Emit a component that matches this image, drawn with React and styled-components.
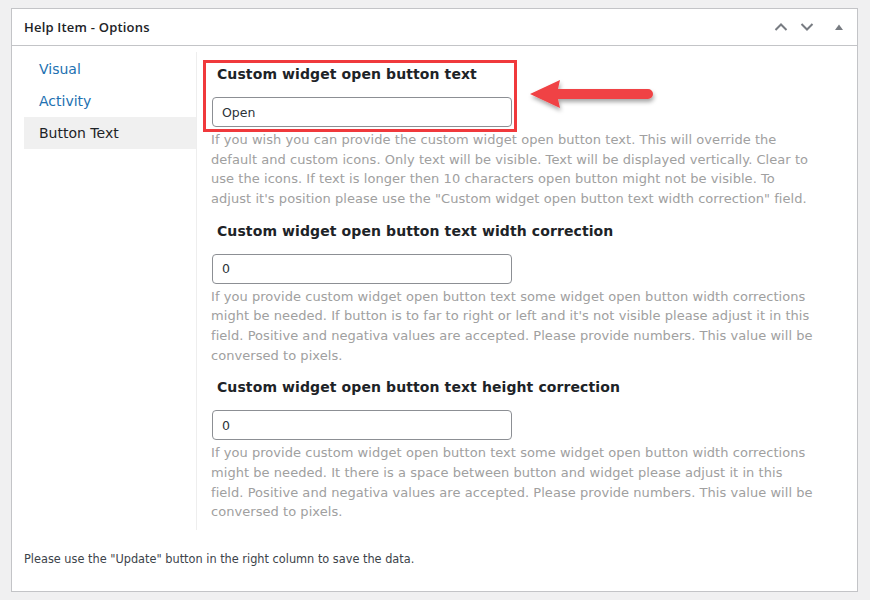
import React from "react";
import styled, { createGlobalStyle } from "styled-components";

const Global = createGlobalStyle`
  html, body { margin: 0; padding: 0; }
  body {
    background: #f0f0f1;
    font-family: "DejaVu Sans", sans-serif;
    color: #3c434a;
  }
  *, *::before, *::after { box-sizing: border-box; }
`;

const Page = styled.div`
  width: 870px;
  height: 600px;
  padding: 8px 12px 8px 11px;
`;

const Panel = styled.div`
  position: relative;
  width: 847px;
  height: 584px;
  background: #fff;
  border: 1px solid #c3c4c7;
  display: flex;
  flex-direction: column;
`;

const Header = styled.div`
  height: 37px;
  border-bottom: 1px solid #c3c4c7;
  display: flex;
  align-items: center;
  padding: 0 5px 0 12px;
`;

const Title = styled.h2`
  margin: 0;
  flex: 1;
  font-family: "Open Sans", "Noto Sans", sans-serif;
  font-size: 13px;
  font-weight: 600;
  letter-spacing: 0.2px;
  color: #1d2327;
`;

const HeaderButtons = styled.div`
  display: flex;
  align-items: center;
`;

const IconButton = styled.button`
  width: 26px;
  height: 36px;
  padding: 0;
  margin-left: ${(p) => (p.$gap ? "6px" : "0")};
  border: 0;
  background: none;
  display: flex;
  align-items: center;
  justify-content: center;
  color: #787c82;
`;

const Body = styled.div`
  display: flex;
  padding: 6px 0 0 12px;
`;

const Sidebar = styled.ul`
  list-style: none;
  margin: 0;
  padding: 1px 0 0 0;
  width: 173px;
  border-right: 1px solid #eeeeee;
  height: 478px;
`;

const TabItem = styled.li`
  height: 32px;
  display: flex;
  align-items: center;
  padding-left: 15px;
  font-family: "DejaVu Sans", sans-serif;
  font-size: 14px;
  color: ${(p) => (p.$active ? "#1d2327" : "#2271b1")};
  background: ${(p) => (p.$active ? "#f0f0f0" : "transparent")};
`;

const Content = styled.div`
  flex: 1;
  padding: 12px 0 0 15px;
  display: flex;
  flex-direction: column;
`;

const Field = styled.div`
  position: relative;
  width: 600px;
  margin-bottom: 12px;

  ${(p) =>
    p.$highlight &&
    `
    &::before {
      content: "";
      position: absolute;
      left: -9px;
      top: -4px;
      width: 314px;
      height: 72px;
      border: 3px solid #f0393c;
      pointer-events: none;
    }
  `}
`;

const Label = styled.label`
  display: block;
  padding-left: 5px;
  font-family: "DejaVu Sans", sans-serif;
  font-weight: bold;
  font-size: 14px;
  line-height: 20px;
  letter-spacing: 0.1px;
  color: #1d2327;
  margin-bottom: 13px;
`;

const Input = styled.input`
  display: block;
  width: 300px;
  height: 30px;
  border: 1px solid #8c8f94;
  border-radius: 4px;
  padding: 0 9px;
  font-family: "DejaVu Sans", sans-serif;
  font-size: 12.5px;
  color: #2c3338;
  background: #fff;
  outline: none;
`;

const Description = styled.p`
  margin: 3px 0 0 -1px;
  font-family: "DejaVu Sans", sans-serif;
  font-size: 13px;
  line-height: 19.67px;
  letter-spacing: 0.05px;
  color: #a0a0a0;
`;

const DescLine = styled.span`
  display: block;
  white-space: nowrap;
`;

const Footer = styled.p`
  margin: 17px 0 0 12px;
  font-family: "DejaVu Sans Condensed", "DejaVu Sans", sans-serif;
  font-size: 12.6px;
  color: #3c434a;
`;

const Arrow = styled.svg`
  position: absolute;
  left: 506px;
  top: 61px;
`;

const ChevronUp = () => (
  <svg width="14" height="10" viewBox="0 0 14 10">
    <path d="M1.5 8 L7 2.5 L12.5 8" fill="none" stroke="currentColor" strokeWidth="2" />
  </svg>
);
const ChevronDown = () => (
  <svg width="14" height="10" viewBox="0 0 14 10">
    <path d="M1.5 2 L7 7.5 L12.5 2" fill="none" stroke="currentColor" strokeWidth="2" />
  </svg>
);
const Triangle = () => (
  <svg width="10" height="8" viewBox="0 0 10 8">
    <path d="M1 7 L5 1.5 L9 7 Z" fill="currentColor" />
  </svg>
);

const fields = [
  {
    label: "Custom widget open button text",
    value: "Open",
    highlight: true,
    desc: [
      "If you wish you can provide the custom widget open button text. This will override the",
      "default and custom icons. Only text will be visible. Text will be displayed vertically. Clear to",
      "use the icons. If text is longer then 10 characters open button might not be visible. To",
      'adjust it\'s position please use the "Custom widget open button text width correction" field.',
    ],
  },
  {
    label: "Custom widget open button text width correction",
    value: "0",
    desc: [
      "If you provide custom widget open button text some widget open button width corrections",
      "might be needed. If button is to far to right or left and it's not visible please adjust it in this",
      "field. Positive and negativa values are accepted. Please provide numbers. This value will be",
      "conversed to pixels.",
    ],
  },
  {
    label: "Custom widget open button text height correction",
    value: "0",
    desc: [
      "If you provide custom widget open button text some widget open button width corrections",
      "might be needed. It there is a space between button and widget please adjust it in this",
      "field. Positive and negativa values are accepted. Please provide numbers. This value will be",
      "conversed to pixels.",
    ],
  },
];

export default function App() {
  return (
    <>
      <Global />
      <Page>
        <Panel>
          <Header>
            <Title>Help Item - Options</Title>
            <HeaderButtons>
              <IconButton aria-label="Move up"><ChevronUp /></IconButton>
              <IconButton aria-label="Move down"><ChevronDown /></IconButton>
              <IconButton aria-label="Toggle" $gap><Triangle /></IconButton>
            </HeaderButtons>
          </Header>
          <Body>
            <Sidebar>
              <TabItem>Visual</TabItem>
              <TabItem>Activity</TabItem>
              <TabItem $active>Button Text</TabItem>
            </Sidebar>
            <Content>
              {fields.map((f) => (
                <Field key={f.label} $highlight={f.highlight}>
                  <Label>{f.label}</Label>
                  <Input defaultValue={f.value} />
                  <Description>
                    {f.desc.map((line) => (
                      <DescLine key={line}>{line}</DescLine>
                    ))}
                  </Description>
                </Field>
              ))}
            </Content>
          </Body>
          <Footer>Please use the "Update" button in the right column to save the data.</Footer>
          <Arrow width="140" height="50" viewBox="0 0 140 50">
            <defs>
              <filter id="sh" x="-20%" y="-50%" width="140%" height="200%">
                <feDropShadow dx="1" dy="3" stdDeviation="2" floodColor="#000" floodOpacity="0.35" />
              </filter>
            </defs>
            <g filter="url(#sh)" fill="#f04244">
              <path d="M12 24 L42 10 L40 19 L130 19 A5 5 0 0 1 130 29 L40 29 L42 38 Z" />
            </g>
          </Arrow>
        </Panel>
      </Page>
    </>
  );
}
